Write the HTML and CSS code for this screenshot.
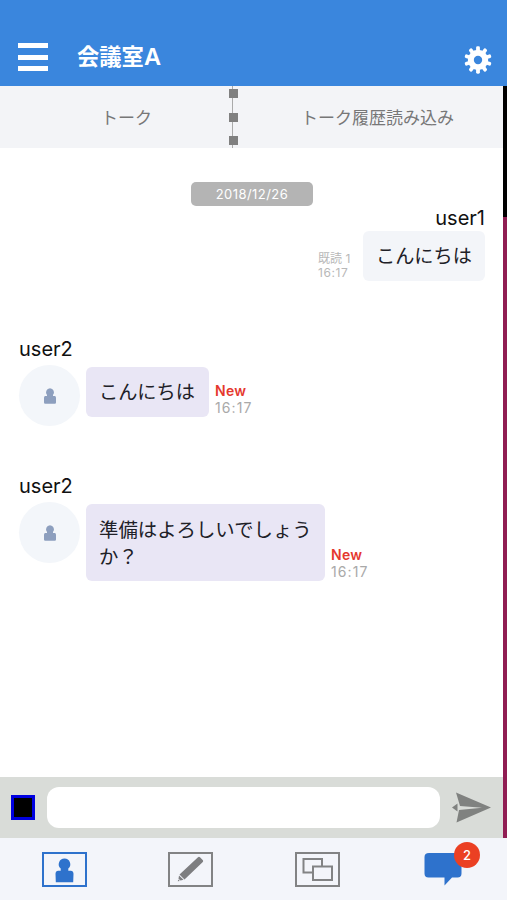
FILE: index.html
```
<!DOCTYPE html>
<html lang="ja">
<head>
<meta charset="utf-8">
<title>会議室A</title>
<link rel="stylesheet" href="styles.css">
</head>
<body>
<div class="app">
  <header class="header">
    <div class="menu"><i></i><i></i><i></i></div>
    <h1>会議室<span>A</span></h1>
    <svg class="gear" viewBox="-14 -14 28 28">
      <g fill="#fff">
        <g id="t"><rect x="-1.9" y="-13.7" width="3.8" height="27.4" rx="1.4"/></g>
        <use href="#t" transform="rotate(36)"/><use href="#t" transform="rotate(72)"/><use href="#t" transform="rotate(108)"/><use href="#t" transform="rotate(144)"/>
        <circle r="10.200"/>
      </g>
      <circle r="4.2" fill="#3a86dd"/>
    </svg>
  </header>
  <div class="body">
    <main class="panel">
      <nav class="tabs">
        <div class="tab first">トーク</div>
        <div class="divider"><i></i><i></i><i></i></div>
        <div class="tab second">トーク履歴読み込み</div>
      </nav>
      <section class="messages">
        <div class="date">2018/12/26</div>
        <article class="mine">
          <div class="name">user1</div>
          <div class="row">
            <div class="read">既読 1<br><span>16:17</span></div>
            <div class="bubble">こんにちは</div>
          </div>
        </article>
        <article class="theirs">
          <div class="name">user2</div>
          <div class="row">
            <div class="avatar"><svg viewBox="0 0 20 26"><path d="M10 0a7 7 0 0 1 5 11.500V13H18q2 0 2 3v8q0 2-2 2H2q-2 0-2-2v-8q0-3 2-3h3v-1.500A7 7 0 0 1 10 0z"/></svg></div>
            <div class="bubble">こんにちは</div>
            <div class="meta"><b>New</b><span>16:17</span></div>
          </div>
        </article>
        <article class="theirs">
          <div class="name">user2</div>
          <div class="row">
            <div class="avatar"><svg viewBox="0 0 20 26"><path d="M10 0a7 7 0 0 1 5 11.500V13H18q2 0 2 3v8q0 2-2 2H2q-2 0-2-2v-8q0-3 2-3h3v-1.500A7 7 0 0 1 10 0z"/></svg></div>
            <div class="bubble long">準備はよろしいでしょう<br>か？</div>
            <div class="meta"><b>New</b><span>16:17</span></div>
          </div>
        </article>
      </section>
      <div class="composer">
        <div class="attach"></div>
        <div class="input"></div>
        <svg class="send" viewBox="0 0 39 32"><path fill="#808280" d="M4 .5 39 15.500 4.500 30.500 7 18 30 15.800 8 14zM0 15.500l5.500-4v8z"/></svg>
      </div>
    </main>
    <aside class="edge"></aside>
  </div>
  <footer class="bar">
    <div class="item"><svg width="45" height="35" viewBox="0 0 45 35"><path fill="none" stroke="#2e72cc" stroke-width="2" d="M1 1h43v33H1z"/><path fill="#2e72cc" d="M22.500 6.500a5.700 5.700 0 0 1 3.800 10v2.200h2.500q2.500 0 2.700 3l-.3 8.600H13.800l-.3-8.600q.2-3 2.700-3h2.500v-2.200A5.700 5.700 0 0 1 22.500 6.500z"/></svg></div>
    <div class="item"><svg width="45" height="35" viewBox="0 0 45 35"><path fill="none" stroke="#828384" stroke-width="2" d="M1 1h43v33H1z"/><path fill="#7d7e80" d="M30 5.200q1-.8 2 .1l2.700 2.700q1 1 .1 2L16.500 27.500l-5-5zM11 23.500l4.500 4.300-3 .7-2-1.800zM10.200 27.500l1.600 1.400-2 .3z"/></svg></div>
    <div class="item"><svg width="45" height="35" viewBox="0 0 45 35"><g fill="none" stroke="#828384" stroke-width="2"><path d="M1 1h43v33H1z"/><path d="M18 20.500H8.500V7H27v7.500M18 14.500h19v13.500H18z"/></g></svg></div>
    <div class="item chat"><svg width="39" height="34" viewBox="0 0 39 34"><path fill="#2e72cc" d="M5 1h28q4.500 0 4.500 4v16.500q0 4-4 4H28L20.500 33.500v-8H4.500q-4 0-4-4V5q0-4 4.500-4z"/></svg><span class="badge">2</span></div>
  </footer>
</div>
</body>
</html>
```
FILE: styles.css
```
* { box-sizing: border-box; }
body { margin: 0; font-family: Inter, "Noto Sans CJK JP", sans-serif; background: #fff; }
.app { width: 507px; height: 900px; display: flex; flex-direction: column; overflow: hidden; }
.header { height: 86px; flex: none; background: #3a86dd; display: flex; align-items: flex-start; padding: 42px 15px 0 18px; color: #fff; }
.menu { width: 30px; height: 28px; margin-top: 1px; display: flex; flex-direction: column; justify-content: space-between; }
.menu i { height: 5px; background: #fff; }
.header h1 { margin: -1px auto 0 29px; font: bold 22.3px/28px "Noto Sans CJK JP", sans-serif; }
.header h1 span { font-family: Inter, sans-serif; font-size: 23.500px; font-weight: 600; }
.gear { width: 28px; height: 28px; margin-top: 3.500px; }
.body { flex: 1; display: flex; min-height: 0; }
.panel { width: 503px; display: flex; flex-direction: column; }
.edge { width: 4px; background: linear-gradient(#000 131px, #901d53 131px); }
.tabs { height: 62px; flex: none; background: #f3f4f7; display: flex; color: #777; font-size: 17px; line-height: 64px; }
.first { width: 229px; padding-left: 101px; }
.divider { width: 9px; padding: 3px 0; display: flex; flex-direction: column; justify-content: space-between; background: linear-gradient(90deg, transparent 3px, #aaa 3px, #aaa 4px, transparent 4px); }
.divider i { height: 9px; background: #808080; }
.second { padding-left: 63px; }
.messages { flex: 1; padding: 34px 18px 0 19px; }
.date { width: 122px; height: 24px; margin: 0 auto; border-radius: 5px; background: #b4b4b4; color: #fff; font-size: 13px; line-height: 24px; letter-spacing: .45px; text-align: center; }
.name { height: 25px; font-size: 20px; line-height: 25px; color: #111; }
.row { display: flex; }
.mine .name { text-align: right; }
.mine .row { justify-content: flex-end; }
.bubble { height: 50px; padding: 0 13px; border-radius: 6px; background: #f3f5f9; font-size: 19.200px; line-height: 50px; color: #202027; white-space: nowrap; width: 122px; }
.read { width: 45px; padding-top: 21px; color: #b8b8b8; font-size: 12px; line-height: 14px; }
.read span { letter-spacing: .6px; }
.theirs { margin-top: 55px; height: 82px; }
.theirs .name { height: 29px; line-height: 26px; }
.avatar { width: 61px; height: 61px; margin: 0 6px 0 0; border-radius: 50%; background: #f3f6fa; display: flex; align-items: center; justify-content: center; }
.avatar svg { width: 12px; height: 16px; fill: #8d9fbe; }
.theirs .bubble { background: #e9e6f5; margin-top: 2px; line-height: 51px; width: 123px; }
.theirs .bubble.long { width: 239px; height: 77px; padding-top: 13px; line-height: 27px; font-size: 19.400px; }
.row .meta { align-self: flex-start; margin: 17px 0 0 6px; font-size: 14px; line-height: 17px; }
.row .long + .meta { margin-top: 44px; }
.meta b, .meta span { display: block; }
.meta b { color: #e5382e; font-weight: 600; letter-spacing: .3px; }
.meta span { color: #a9a9a9; letter-spacing: 1.1px; }
.composer { height: 61px; background: #d9dcd8; display: flex; align-items: center; padding: 0 12px 0 11px; }
.attach { width: 24px; height: 25px; border: 3px solid #0000e0; background: #000; }
.input { width: 393px; height: 41px; margin: 0 12px; border-radius: 12px; background: #fff; }
.send { width: 39px; height: 32px; }
.bar { height: 62px; flex: none; background: #f3f5fa; display: flex; padding-left: 1px; }
.item { width: 126.500px; padding-top: 14px; display: flex; justify-content: center; position: relative; }
.badge { position: absolute; left: 73.500px; top: 4px; width: 26px; height: 26px; border-radius: 50%; background: #eb4023; color: #fff; font-size: 13px; font-weight: 500; line-height: 26px; text-align: center; }
```
